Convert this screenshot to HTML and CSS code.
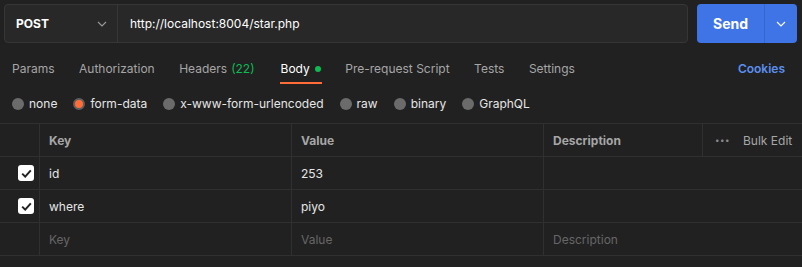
FILE: index.html
```html
<!DOCTYPE html>
<html lang="en">
<head>
    <meta charset="UTF-8">
    <title>Request - star.php</title>
    <link rel="stylesheet" href="styles.css">
</head>
<body>
    <div class="request-bar">
        <div class="url-group">
            <div class="method">
                <span>POST</span>
                <svg class="chevron" width="10" height="6" viewBox="0 0 10 6"><path d="M1 1l4 4 4-4" fill="none" stroke="#9a9a9a" stroke-width="1.1"/></svg>
            </div>
            <div class="url">http://localhost:8004/star.php</div>
        </div>
        <div class="send">
            <span class="send-label">Send</span>
            <span class="send-more">
                <svg width="10" height="6" viewBox="0 0 10 6"><path d="M1 1l4 4 4-4" fill="none" stroke="#ffffff" stroke-width="1.1"/></svg>
            </span>
        </div>
    </div>

    <div class="tabs">
        <span class="tab">Params</span>
        <span class="tab">Authorization</span>
        <span class="tab">Headers <span class="count">(22)</span></span>
        <span class="tab active">Body <span class="dot"></span></span>
        <span class="tab">Pre-request Script</span>
        <span class="tab">Tests</span>
        <span class="tab">Settings</span>
        <span class="cookies">Cookies</span>
    </div>

    <div class="body-types">
        <label class="radio"><span class="circle"></span>none</label>
        <label class="radio selected"><span class="circle"></span>form-data</label>
        <label class="radio"><span class="circle"></span>x-www-form-urlencoded</label>
        <label class="radio"><span class="circle"></span>raw</label>
        <label class="radio"><span class="circle"></span>binary</label>
        <label class="radio"><span class="circle"></span>GraphQL</label>
    </div>

    <div class="kv-table">
        <div class="cell"></div>
        <div class="cell head">Key</div>
        <div class="cell head">Value</div>
        <div class="cell head desc-head">
            <span>Description</span>
            <span class="bulk"><span class="more">•••</span>Bulk Edit</span>
        </div>

        <div class="cell check-cell"><span class="checkbox"><svg width="11" height="9" viewBox="0 0 11 9"><path d="M1.2 4.6l3 3 5.6-6.2" fill="none" stroke="#222" stroke-width="2"/></svg></span></div>
        <div class="cell">id</div>
        <div class="cell">253</div>
        <div class="cell"></div>

        <div class="cell check-cell"><span class="checkbox"><svg width="11" height="9" viewBox="0 0 11 9"><path d="M1.2 4.6l3 3 5.6-6.2" fill="none" stroke="#222" stroke-width="2"/></svg></span></div>
        <div class="cell">where</div>
        <div class="cell">piyo</div>
        <div class="cell"></div>

        <div class="cell"></div>
        <div class="cell placeholder">Key</div>
        <div class="cell placeholder">Value</div>
        <div class="cell placeholder">Description</div>
    </div>
</body>
</html>
```

FILE: styles.css
```css
body {
    margin: 0;
    background-color: #212121;
    color: #e6e6e6;
    font-family: Inter, 'Noto Sans', sans-serif;
    font-size: 12px;
}

.request-bar {
    display: flex;
    gap: 9px;
    padding: 4px 5px 0 4px;
    height: 39px;
}

.url-group {
    flex: 1;
    display: flex;
    background-color: #282828;
    border: 1px solid #363636;
    border-radius: 4px;
}

.method {
    width: 113px;
    box-sizing: border-box;
    display: flex;
    align-items: center;
    justify-content: space-between;
    padding: 0 10px 0 11px;
    border-right: 1px solid #363636;
    color: #ffffff;
    font-weight: 700;
    font-size: 12px;
}

.url {
    display: flex;
    align-items: center;
    padding-left: 12px;
    color: #ffffff;
    font-size: 12px;
}

.send {
    width: 100px;
    display: flex;
    background-color: #3f74e6;
    border-radius: 4px;
    color: #ffffff;
}

.send-label {
    flex: 1;
    display: flex;
    align-items: center;
    justify-content: center;
    font-weight: 700;
    font-size: 14px;
    border-right: 1px solid #3566cc;
}

.send-more {
    width: 32px;
    display: flex;
    align-items: center;
    justify-content: center;
}

.tabs {
    display: flex;
    align-items: center;
    gap: 24.5px;
    height: 31px;
    margin-top: 10px;
    padding: 0 12px;
    color: #a6a6a6;
    font-size: 12px;
}

.tab {
    position: relative;
    display: flex;
    align-items: center;
    gap: 4px;
    height: 100%;
}

.tab .count {
    color: #0cbb52;
}

.tab.active {
    color: #ffffff;
    margin-left: 1.5px;
}

.tab.active::after {
    content: '';
    position: absolute;
    left: -1px;
    right: -1px;
    bottom: 0;
    height: 2px;
    background-color: #ff6c37;
}

.dot {
    width: 6px;
    height: 6px;
    border-radius: 50%;
    background-color: #0cbb52;
    margin-left: 1px;
}

.cookies {
    margin-left: auto;
    margin-right: 5px;
    color: #5a8ff0;
    font-weight: 600;
}

.body-types {
    display: flex;
    align-items: center;
    gap: 16px;
    height: 39px;
    padding: 0 12px;
    color: #e6e6e6;
}

.radio {
    display: flex;
    align-items: center;
    gap: 5px;
}

.circle {
    width: 12px;
    height: 12px;
    border-radius: 50%;
    background-color: #6b6b6b;
    box-sizing: border-box;
}

.radio.selected .circle {
    background-color: #ff6c37;
    border: 2px solid #5e5e5e;
}

.kv-table {
    display: grid;
    grid-template-columns: 40px 252px 252px 1fr;
    border-top: 1px solid #303030;
}

.cell {
    height: 32px;
    display: flex;
    align-items: center;
    padding-left: 9px;
    border-bottom: 1px solid #303030;
    border-right: 1px solid #303030;
    color: #e6e6e6;
}

.cell:nth-child(4n) {
    border-right: none;
}

.head {
    color: #a6a6a6;
    font-weight: 700;
}

.desc-head {
    justify-content: space-between;
    padding-right: 0;
}

.bulk {
    display: flex;
    align-items: center;
    height: 100%;
    width: 100px;
    box-sizing: border-box;
    border-left: 1px solid #303030;
    padding-left: 12px;
    font-weight: 400;
    color: #a6a6a6;
}

.more {
    font-size: 8px;
    letter-spacing: 0.5px;
    margin-right: 13px;
    color: #8a8a8a;
}

.check-cell {
    justify-content: flex-end;
    padding: 0 5px 0 0;
}

.checkbox {
    width: 16px;
    height: 16px;
    box-sizing: border-box;
    background-color: #ffffff;
    border-radius: 3px;
    display: flex;
    align-items: center;
    justify-content: center;
}

.placeholder {
    color: #666666;
}
```
